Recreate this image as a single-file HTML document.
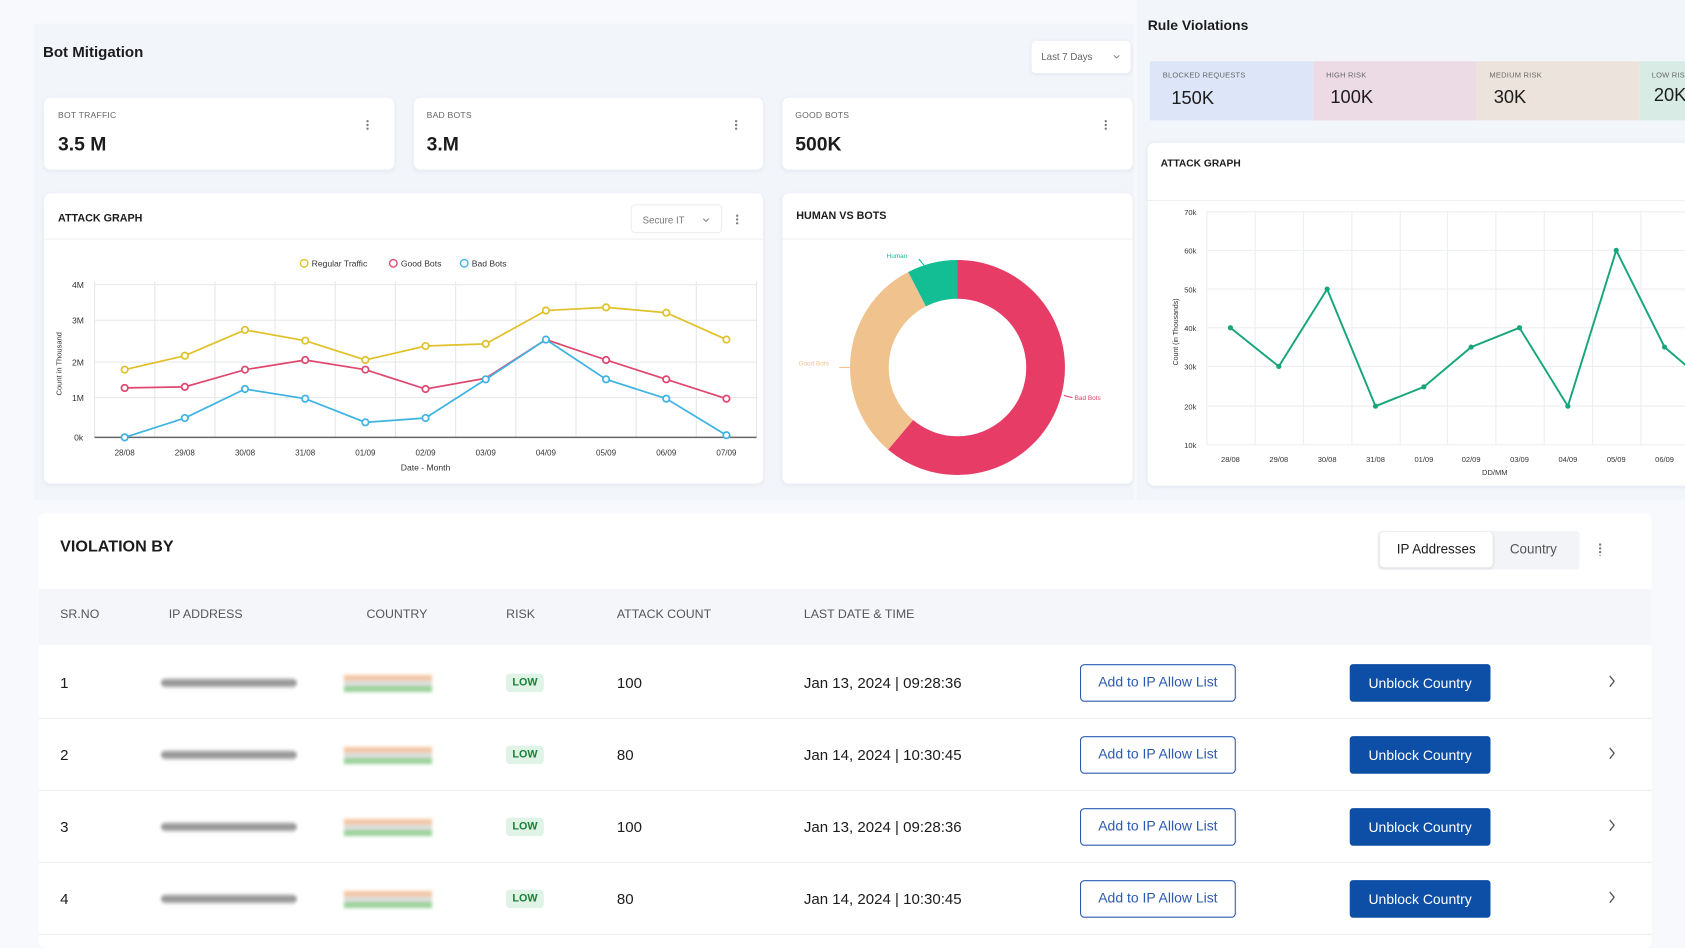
<!DOCTYPE html>
<html><head><meta charset="utf-8"><style>
*{box-sizing:border-box;margin:0;padding:0}
html,body{width:1685px;height:948px;overflow:hidden;background:#f7f9fc;font-family:"Liberation Sans",sans-serif;color:#1c1c1c}
#w{position:absolute;left:0;top:0;width:1568px;height:882px;transform:scale(1.07462);transform-origin:0 0}
.a{position:absolute;white-space:nowrap}
.card{position:absolute;background:#fff;border-radius:6px;box-shadow:0 1px 4px rgba(40,60,100,.08)}
.lbl{font-size:8px;color:#666;letter-spacing:.2px}
.big{font-size:18px;font-weight:bold}
.dots{position:absolute;width:2px;height:10px;background:radial-gradient(circle,#777 1px,transparent 1.2px) 0 0/2px 3.5px repeat-y}
.th{position:absolute;top:566px;font-size:11.5px;color:#555;white-space:nowrap}
.row{position:absolute;left:36px;width:1501px;height:67px;border-bottom:1px solid #edf0f4}
.row span{position:absolute;top:25px;font-size:14px;white-space:nowrap}
.blur1{position:absolute;left:114px;top:29px;width:126px;height:9px;background:linear-gradient(#ccc,#888,#ccc);filter:blur(1.5px);border-radius:4px}
.flag{position:absolute;left:284px;top:26px;width:82px;height:16px;filter:blur(1.5px);background:linear-gradient(#f3c7a5 0,#f3c7a5 33%,#ddd 33%,#ddd 66%,#9cd39c 66%)}
.low{position:absolute;left:435px;top:25px;width:35px;height:17px;background:#dff3e6;color:#188038;font-size:10px;font-weight:bold;text-align:center;line-height:17px;border-radius:3px}
.b1{position:absolute;left:969px;top:16px;width:145px;height:35px;border:1.5px solid #2a5bb0;border-radius:4px;color:#2a5bb0;font-size:13px;text-align:center;line-height:32px;background:#fff}
.b2{position:absolute;left:1220px;top:16px;width:131px;height:35px;background:#0d4ea6;border-radius:3px;color:#fff;font-size:13px;text-align:center;line-height:35px}
.chev{position:absolute;left:1460px;top:26px}
</style></head><body><div id="w">
<div class="a" style="left:32px;top:22px;width:1023px;height:443px;background:#f2f5fa"></div>
<div class="a" style="left:1058px;top:0;width:510px;height:465px;background:#f2f5fa"></div>
<div class="a" style="left:40px;top:40px;font-size:14px;font-weight:bold">Bot Mitigation</div>
<div class="card" style="left:960px;top:38px;width:92px;height:30px;border-radius:4px"><span class="a" style="left:9px;top:10px;font-size:9px;color:#666">Last 7 Days</span><svg class="a" style="left:76px;top:13px" width="6" height="4"><path d="M0.5 0.5L3 3L5.5 0.5" fill="none" stroke="#888"/></svg></div>

<div class="card" style="left:41px;top:91px;width:326px;height:67px"><div class="a lbl" style="left:13px;top:12px">BOT TRAFFIC</div><div class="a big" style="left:13px;top:33px">3.5 M</div><div class="dots" style="left:300px;top:20px"></div></div>
<div class="card" style="left:385px;top:91px;width:325px;height:67px"><div class="a lbl" style="left:12px;top:12px">BAD BOTS</div><div class="a big" style="left:12px;top:33px">3.M</div><div class="dots" style="left:299px;top:20px"></div></div>
<div class="card" style="left:728px;top:91px;width:326px;height:67px"><div class="a lbl" style="left:12px;top:12px">GOOD BOTS</div><div class="a big" style="left:12px;top:33px">500K</div><div class="dots" style="left:300px;top:20px"></div></div>

<div class="card" style="left:41px;top:180px;width:669px;height:270px">
<div class="a" style="left:13px;top:18px;font-size:10px;font-weight:bold">ATTACK GRAPH</div>
<div class="a" style="left:546px;top:10px;width:85px;height:27px;border:1px solid #eee;border-radius:4px"><span class="a" style="left:10px;top:9px;font-size:9px;color:#777">Secure IT</span><svg class="a" style="left:66px;top:12px" width="6" height="4"><path d="M0.5 0.5L3 3L5.5 0.5" fill="none" stroke="#888"/></svg></div>
<div class="dots" style="left:644px;top:19px"></div>
<div class="a" style="left:0;top:42px;width:669px;height:1px;background:#eef0f4"></div>
</div>
<svg class="a" style="left:0;top:0" width="1568" height="882">
<g font-family="Liberation Sans" font-size="8" fill="#333">
<circle cx="283" cy="245" r="3.5" fill="none" stroke="#e0c12a" stroke-width="1.3"/><text x="290" y="248">Regular Traffic</text>
<circle cx="366" cy="245" r="3.5" fill="none" stroke="#e0476f" stroke-width="1.3"/><text x="373" y="248">Good Bots</text>
<circle cx="432" cy="245" r="3.5" fill="none" stroke="#3db3e3" stroke-width="1.3"/><text x="439" y="248">Bad Bots</text>
<g stroke="#e5e7ea" stroke-width="1">
<line x1="88" y1="265" x2="704" y2="265"/><line x1="88" y1="298" x2="704" y2="298"/><line x1="88" y1="337" x2="704" y2="337"/><line x1="88" y1="370" x2="704" y2="370"/>
<line x1="88" y1="262" x2="88" y2="407"/><line x1="144" y1="262" x2="144" y2="407"/><line x1="200" y1="262" x2="200" y2="407"/><line x1="256" y1="262" x2="256" y2="407"/><line x1="312" y1="262" x2="312" y2="407"/><line x1="368" y1="262" x2="368" y2="407"/><line x1="424" y1="262" x2="424" y2="407"/><line x1="480" y1="262" x2="480" y2="407"/><line x1="536" y1="262" x2="536" y2="407"/><line x1="592" y1="262" x2="592" y2="407"/><line x1="648" y1="262" x2="648" y2="407"/><line x1="704" y1="262" x2="704" y2="407"/>
</g>
<line x1="88" y1="407" x2="704" y2="407" stroke="#666" stroke-width="1.3"/>
<text x="67" y="268">4M</text><text x="67" y="301">3M</text><text x="67" y="340">2M</text><text x="67" y="373">1M</text><text x="69" y="410">0k</text>
<text transform="translate(57,368) rotate(-90)" font-size="7">Count in Thousand</text>
<g font-size="7.5" text-anchor="middle"><text x="116" y="424">28/08</text><text x="172" y="424">29/08</text><text x="228" y="424">30/08</text><text x="284" y="424">31/08</text><text x="340" y="424">01/09</text><text x="396" y="424">02/09</text><text x="452" y="424">03/09</text><text x="508" y="424">04/09</text><text x="564" y="424">05/09</text><text x="620" y="424">06/09</text><text x="676" y="424">07/09</text><text x="396" y="438" font-size="8">Date - Month</text></g>
</g>
<g fill="#fff" stroke-width="1.6">
<polyline fill="none" stroke="#e0c12a" points="116,344 172,331 228,307 284,317 340,335 396,322 452,320 508,289 564,286 620,291 676,316"/>
<polyline fill="none" stroke="#e0476f" points="116,361 172,360 228,344 284,335 340,344 396,362 452,352 508,316 564,335 620,353 676,371"/>
<polyline fill="none" stroke="#3db3e3" points="116,407 172,389 228,362 284,371 340,393 396,389 452,353 508,316 564,353 620,371 676,405"/>
<g stroke="#e0c12a"><circle cx="116" cy="344" r="3"/><circle cx="172" cy="331" r="3"/><circle cx="228" cy="307" r="3"/><circle cx="284" cy="317" r="3"/><circle cx="340" cy="335" r="3"/><circle cx="396" cy="322" r="3"/><circle cx="452" cy="320" r="3"/><circle cx="508" cy="289" r="3"/><circle cx="564" cy="286" r="3"/><circle cx="620" cy="291" r="3"/><circle cx="676" cy="316" r="3"/></g>
<g stroke="#e0476f"><circle cx="116" cy="361" r="3"/><circle cx="172" cy="360" r="3"/><circle cx="228" cy="344" r="3"/><circle cx="284" cy="335" r="3"/><circle cx="340" cy="344" r="3"/><circle cx="396" cy="362" r="3"/><circle cx="620" cy="353" r="3"/><circle cx="676" cy="371" r="3"/><circle cx="564" cy="335" r="3"/></g>
<g stroke="#3db3e3"><circle cx="116" cy="407" r="3"/><circle cx="172" cy="389" r="3"/><circle cx="228" cy="362" r="3"/><circle cx="284" cy="371" r="3"/><circle cx="340" cy="393" r="3"/><circle cx="396" cy="389" r="3"/><circle cx="452" cy="353" r="3"/><circle cx="508" cy="316" r="3"/><circle cx="564" cy="353" r="3"/><circle cx="620" cy="371" r="3"/><circle cx="676" cy="405" r="3"/></g>
</g>
</svg>

<div class="card" style="left:728px;top:180px;width:326px;height:270px">
<div class="a" style="left:13px;top:16px;font-size:10px;font-weight:bold">HUMAN VS BOTS</div>
<div class="a" style="left:0;top:42px;width:326px;height:1px;background:#eef0f4"></div>
</div>
<svg class="a" style="left:0;top:0" width="1568" height="882">
<g transform="translate(891,342) rotate(-90)" fill="none" stroke-width="36">
<circle r="82" stroke="#e63c66" stroke-dasharray="315 600"/>
<circle r="82" stroke="#f0c28e" stroke-dasharray="0 315 161 600"/>
<circle r="82" stroke="#13be95" stroke-dasharray="0 476 40 600"/>
</g>
<g font-family="Liberation Sans" font-size="6">
<text x="825" y="240" fill="#13be95">Human</text><line x1="855" y1="241" x2="860" y2="247" stroke="#13be95"/>
<text x="743" y="340" fill="#f0c28e">Good Bots</text><line x1="781" y1="342" x2="791" y2="342" stroke="#f0c28e"/>
<text x="1000" y="372" fill="#e63c66">Bad Bots</text><line x1="990" y1="368" x2="998" y2="370" stroke="#e63c66"/>
</g>
</svg>

<div class="a" style="left:1068px;top:16px;font-size:13px;font-weight:bold">Rule Violations</div>
<div class="a" style="left:1070px;top:57px;width:152px;height:55px;background:#dce6f8"></div>
<div class="a" style="left:1222px;top:57px;width:152px;height:55px;background:#ecdbe5"></div>
<div class="a" style="left:1374px;top:57px;width:152px;height:55px;background:#ece3dc"></div>
<div class="a" style="left:1526px;top:57px;width:42px;height:55px;background:#d8ece5"></div>
<div class="a lbl" style="left:1082px;top:67px;font-size:7px">BLOCKED REQUESTS</div><div class="a" style="left:1090px;top:82px;font-size:17px">150K</div>
<div class="a lbl" style="left:1234px;top:67px;font-size:7px">HIGH RISK</div><div class="a" style="left:1238px;top:81px;font-size:17px">100K</div>
<div class="a lbl" style="left:1386px;top:67px;font-size:7px">MEDIUM RISK</div><div class="a" style="left:1390px;top:81px;font-size:17px">30K</div>
<div class="a lbl" style="left:1537px;top:67px;font-size:7px">LOW RISK</div><div class="a" style="left:1539px;top:79px;font-size:17px">20K</div>

<div class="card" style="left:1068px;top:133px;width:520px;height:319px">
<div class="a" style="left:12px;top:14px;font-size:9.5px;font-weight:bold">ATTACK GRAPH</div>
<div class="a" style="left:0;top:53px;width:520px;height:1px;background:#eef0f4"></div>
</div>
<svg class="a" style="left:0;top:0" width="1568" height="882">
<g stroke="#eceef1"><line x1="1123" y1="197" x2="1568" y2="197"/><line x1="1123" y1="233" x2="1568" y2="233"/><line x1="1123" y1="269" x2="1568" y2="269"/><line x1="1123" y1="305" x2="1568" y2="305"/><line x1="1123" y1="341" x2="1568" y2="341"/><line x1="1123" y1="378" x2="1568" y2="378"/><line x1="1123" y1="414" x2="1568" y2="414"/>
<line x1="1123" y1="197" x2="1123" y2="414"/><line x1="1168" y1="197" x2="1168" y2="414"/><line x1="1213" y1="197" x2="1213" y2="414"/><line x1="1258" y1="197" x2="1258" y2="414"/><line x1="1303" y1="197" x2="1303" y2="414"/><line x1="1347" y1="197" x2="1347" y2="414"/><line x1="1392" y1="197" x2="1392" y2="414"/><line x1="1437" y1="197" x2="1437" y2="414"/><line x1="1482" y1="197" x2="1482" y2="414"/><line x1="1527" y1="197" x2="1527" y2="414"/></g>
<g font-family="Liberation Sans" font-size="7" fill="#333"><text x="1102" y="200">70k</text><text x="1102" y="236">60k</text><text x="1102" y="272">50k</text><text x="1102" y="308">40k</text><text x="1102" y="344">30k</text><text x="1102" y="381">20k</text><text x="1102" y="417">10k</text>
<text transform="translate(1096,340) rotate(-90)" font-size="6.5">Count (in Thousands)</text>
<g text-anchor="middle"><text x="1145" y="430">28/08</text><text x="1190" y="430">29/08</text><text x="1235" y="430">30/08</text><text x="1280" y="430">31/08</text><text x="1325" y="430">01/09</text><text x="1369" y="430">02/09</text><text x="1414" y="430">03/09</text><text x="1459" y="430">04/09</text><text x="1504" y="430">05/09</text><text x="1549" y="430">06/09</text><text x="1391" y="442">DD/MM</text></g></g>
<polyline fill="none" stroke="#17a67a" stroke-width="1.8" points="1145,305 1190,341 1235,269 1280,378 1325,360 1369,323 1414,305 1459,378 1504,233 1549,323 1570,341"/>
<g fill="#17a67a"><circle cx="1145" cy="305" r="2.4"/><circle cx="1190" cy="341" r="2.4"/><circle cx="1235" cy="269" r="2.4"/><circle cx="1280" cy="378" r="2.4"/><circle cx="1325" cy="360" r="2.4"/><circle cx="1369" cy="323" r="2.4"/><circle cx="1414" cy="305" r="2.4"/><circle cx="1459" cy="378" r="2.4"/><circle cx="1504" cy="233" r="2.4"/><circle cx="1549" cy="323" r="2.4"/></g>
</svg>

<div class="a" style="left:36px;top:478px;width:1501px;height:404px;background:#fff;border-radius:6px"></div>
<div class="a" style="left:56px;top:500px;font-size:15px;font-weight:bold">VIOLATION BY</div>
<div class="a" style="left:1282px;top:494px;width:188px;height:36px;background:#f2f4f7;border-radius:4px"></div>
<div class="a" style="left:1284px;top:495px;width:105px;height:33px;background:#fff;border-radius:4px;box-shadow:0 1px 3px rgba(0,0,0,.12);font-size:12.5px;text-align:center;line-height:33px">IP Addresses</div>
<div class="a" style="left:1405px;top:504px;font-size:12.5px;color:#555">Country</div>
<div class="dots" style="left:1488px;top:505px;height:12px"></div>
<div class="a" style="left:36px;top:548px;width:1501px;height:52px;background:#f4f6fa"></div>
<div class="th" style="left:56px">SR.NO</div><div class="th" style="left:157px">IP ADDRESS</div><div class="th" style="left:341px">COUNTRY</div><div class="th" style="left:471px">RISK</div><div class="th" style="left:574px">ATTACK COUNT</div><div class="th" style="left:748px">LAST DATE &amp; TIME</div>

<div class="row" style="top:602px"><span style="left:20px">1</span><div class="blur1"></div><div class="flag"></div><div class="low">LOW</div><span style="left:538px">100</span><span style="left:712px">Jan 13, 2024 | 09:28:36</span><div class="b1">Add to IP Allow List</div><div class="b2">Unblock Country</div><svg class="chev" width="8" height="12"><path d="M2 1L6 6L2 11" fill="none" stroke="#555" stroke-width="1.2"/></svg></div>
<div class="row" style="top:669px"><span style="left:20px">2</span><div class="blur1"></div><div class="flag"></div><div class="low">LOW</div><span style="left:538px">80</span><span style="left:712px">Jan 14, 2024 | 10:30:45</span><div class="b1">Add to IP Allow List</div><div class="b2">Unblock Country</div><svg class="chev" width="8" height="12"><path d="M2 1L6 6L2 11" fill="none" stroke="#555" stroke-width="1.2"/></svg></div>
<div class="row" style="top:736px"><span style="left:20px">3</span><div class="blur1"></div><div class="flag"></div><div class="low">LOW</div><span style="left:538px">100</span><span style="left:712px">Jan 13, 2024 | 09:28:36</span><div class="b1">Add to IP Allow List</div><div class="b2">Unblock Country</div><svg class="chev" width="8" height="12"><path d="M2 1L6 6L2 11" fill="none" stroke="#555" stroke-width="1.2"/></svg></div>
<div class="row" style="top:803px"><span style="left:20px">4</span><div class="blur1"></div><div class="flag"></div><div class="low">LOW</div><span style="left:538px">80</span><span style="left:712px">Jan 14, 2024 | 10:30:45</span><div class="b1">Add to IP Allow List</div><div class="b2">Unblock Country</div><svg class="chev" width="8" height="12"><path d="M2 1L6 6L2 11" fill="none" stroke="#555" stroke-width="1.2"/></svg></div>
</div></body></html>
